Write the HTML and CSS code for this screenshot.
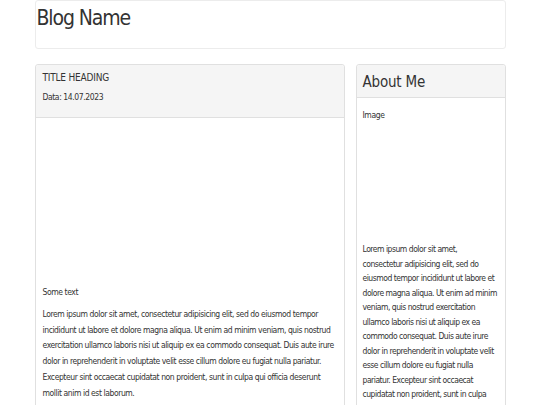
FILE: index.html
```html
<!DOCTYPE html>
<html lang="en">

<head>
    <meta charset="UTF-8">
    <meta name="viewport" content="width=device-width, initial-scale=1.0">
    <title>Blog Name</title>
    <link rel="stylesheet" href="styles.css">
</head>

<body>
    <div class="container">
        <header class="blog-header">
            <h1>Blog Name</h1>
        </header>

        <div class="row">
            <article class="card post">
                <div class="card-head">
                    <h2 class="post-title">TITLE HEADING</h2>
                    <p class="post-date">Data: 14.07.2023</p>
                </div>
                <div class="card-body">
                    <div class="post-image"></div>
                    <p class="post-lead">Some text</p>
                    <p class="post-text">Lorem ipsum dolor sit amet, consectetur adipisicing elit, sed do eiusmod tempor incididunt ut labore et dolore magna aliqua. Ut enim ad minim veniam, quis nostrud exercitation ullamco laboris nisi ut aliquip ex ea commodo consequat. Duis aute irure dolor in reprehenderit in voluptate velit esse cillum dolore eu fugiat nulla pariatur. Excepteur sint occaecat cupidatat non proident, sunt in culpa qui officia deserunt mollit anim id est laborum.</p>
                </div>
            </article>

            <aside class="card about">
                <div class="card-head">
                    <h2 class="about-title">About Me</h2>
                </div>
                <div class="card-body">
                    <div class="about-image">Image</div>
                    <p class="about-text">Lorem ipsum dolor sit amet, consectetur adipisicing elit, sed do eiusmod tempor incididunt ut labore et dolore magna aliqua. Ut enim ad minim veniam, quis nostrud exercitation ullamco laboris nisi ut aliquip ex ea commodo consequat. Duis aute irure dolor in reprehenderit in voluptate velit esse cillum dolore eu fugiat nulla pariatur. Excepteur sint occaecat cupidatat non proident, sunt in culpa qui officia deserunt mollit anim id est laborum.</p>
                </div>
            </aside>
        </div>
    </div>
</body>

</html>
```

FILE: styles.css
```css
body {
    font-family: "DejaVu Sans Condensed", "DejaVu Sans", sans-serif;
    color: #333;
    background-color: #fff;
    margin: 0;
    padding: 0;
}

.container {
    width: 471px;
    margin: 0 auto;
}

.blog-header {
    border: 1px solid #ececec;
    border-radius: 3px;
    padding: 2px 0 15px 1px;
}

.blog-header h1 {
    margin: 0;
    font-size: 21px;
    font-weight: normal;
    line-height: 30px;
    letter-spacing: -1.1px;
}

.row {
    display: grid;
    grid-template-columns: 310px 150px;
    gap: 11px;
    margin-top: 15px;
    align-items: start;
}

.card {
    border: 1px solid #e0e0e0;
    border-radius: 3px;
    background: #fff;
}

.card-head {
    background: #f5f5f5;
    border-bottom: 1px solid #e0e0e0;
    border-radius: 3px 3px 0 0;
}

.post .card-head {
    padding: 6px 7px 14px;
}

.post-title {
    margin: 0;
    font-size: 10px;
    font-weight: normal;
    line-height: 14px;
    letter-spacing: -0.2px;
}

.post-date {
    margin: 6px 0 0;
    font-size: 8.5px;
    line-height: 12px;
    letter-spacing: -0.4px;
}

.post .card-body {
    padding: 7px 7px 10px;
}

.post-image {
    height: 161px;
}

.post-lead {
    margin: 0;
    font-size: 8.5px;
    line-height: 12px;
    letter-spacing: -0.4px;
}

.post-text {
    margin: 9px 0 0;
    font-size: 8.5px;
    letter-spacing: -0.42px;
    line-height: 15.7px;
}

.about .card-head {
    padding: 7px 6px 5px;
}

.about-title {
    margin: 0;
    font-size: 15px;
    font-weight: normal;
    line-height: 20px;
    letter-spacing: -0.2px;
}

.about .card-body {
    padding: 7px 6px 10px;
}

.about-image {
    height: 133px;
    padding-top: 4px;
    font-size: 8.5px;
    line-height: 12px;
    letter-spacing: -0.4px;
}

.about-text {
    margin: 0;
    font-size: 8.5px;
    letter-spacing: -0.48px;
    line-height: 14.5px;
}
```
